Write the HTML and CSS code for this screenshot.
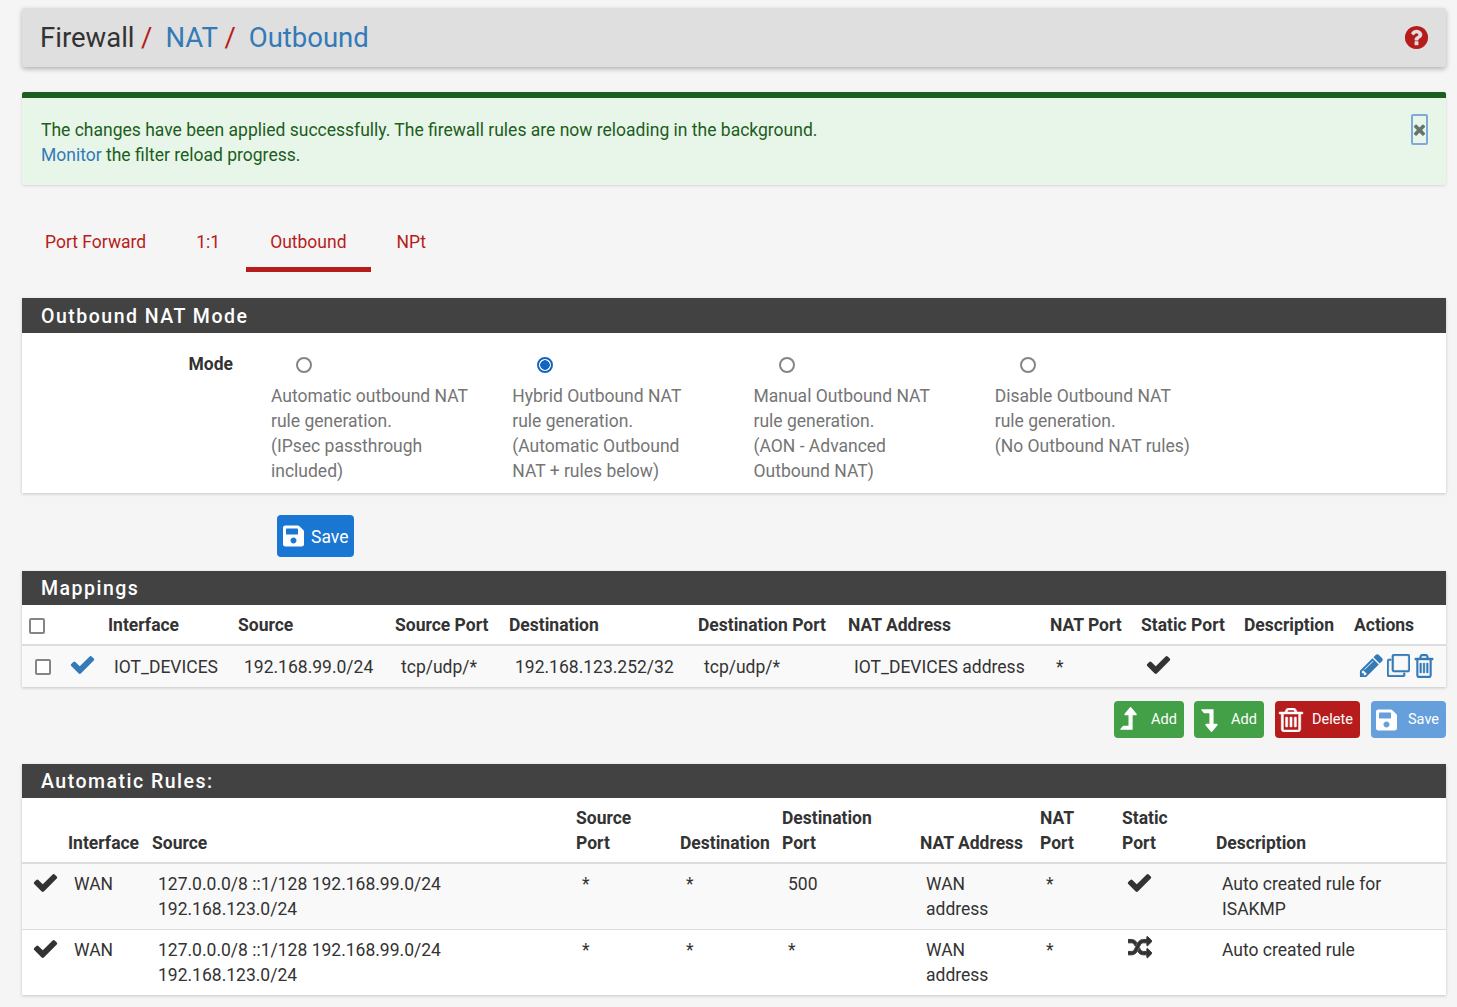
FILE: index.html
```html
<!DOCTYPE html>
<html lang="en">
<head>
<meta charset="utf-8">
<title>Firewall / NAT / Outbound</title>
<link rel="stylesheet" href="styles.css">
</head>
<body>
<svg class="defs" width="0" height="0" aria-hidden="true">
  <defs>
    <symbol id="i-check" viewBox="0 0 1792 1792"><path d="M1671 566q0 40-28 68l-724 724-136 136q-28 28-68 28t-68-28l-136-136-362-362q-28-28-28-68t28-68l136-136q28-28 68-28t68 28l294 295 656-657q28-28 68-28t68 28l136 136q28 28 28 68z"/></symbol>
    <symbol id="i-trash" viewBox="128 128 1536 1536" preserveAspectRatio="none"><path class="trash-path" d="M704 736v576q0 14-9 23t-23 9h-64q-14 0-23-9t-9-23v-576q0-14 9-23t23-9h64q14 0 23 9t9 23zm256 0v576q0 14-9 23t-23 9h-64q-14 0-23-9t-9-23v-576q0-14 9-23t23-9h64q14 0 23 9t9 23zm256 0v576q0 14-9 23t-23 9h-64q-14 0-23-9t-9-23v-576q0-14 9-23t23-9h64q14 0 23 9t9 23zm128 724v-948h-896v948q0 22 7 40.500t14.500 27 10.500 8.500h832q3 0 10.500-8.500t14.500-27 7-40.500zm-672-1076h448l-48-117q-7-9-17-11h-317q-10 2-17 11zm928 32v64q0 14-9 23t-23 9h-96v948q0 83-47 143.500t-113 60.500h-832q-66 0-113-58.500t-47-141.500v-952h-96q-14 0-23-9t-9-23v-64q0-14 9-23t23-9h309l70-167q15-37 54-63t79-26h320q40 0 79 26t54 63l70 167h309q14 0 23 9t9 23z"/></symbol>
    <symbol id="i-save" viewBox="0 0 448 512"><path d="M433.941 129.941l-83.882-83.882A48 48 0 0 0 316.118 32H48C21.49 32 0 53.49 0 80v352c0 26.51 21.49 48 48 48h352c26.51 0 48-21.49 48-48V163.882a48 48 0 0 0-14.059-33.941zM224 416c-35.346 0-64-28.654-64-64 0-35.346 28.654-64 64-64s64 28.654 64 64c0 35.346-28.654 64-64 64zm96-304.520V212c0 6.627-5.373 12-12 12H76c-6.627 0-12-5.373-12-12V108c0-6.627 5.373-12 12-12h228.520c3.183 0 6.235 1.264 8.485 3.515l3.480 3.480A11.996 11.996 0 0 1 320 111.480z"/></symbol>
    <symbol id="i-pencil" viewBox="0 0 1792 1792"><path d="M491 1536l91-91-235-235-91 91v107h128v128h107zm523-928q0-22-22-22-10 0-17 7l-542 542q-7 7-7 17 0 22 22 22 10 0 17-7l542-542q7-7 7-17zm-54-192l416 416-832 832h-416v-416zm683 96q0 53-37 90l-166 166-416-416 166-165q36-38 90-38 53 0 91 38l235 234q37 39 37 91z"/></symbol>
    <symbol id="i-clone" viewBox="0 0 1792 1792"><path class="clone-path" d="M1664 1632v-1088q0-13-9.500-22.500t-22.500-9.500h-1088q-13 0-22.500 9.500t-9.500 22.500v1088q0 13 9.500 22.500t22.500 9.500h1088q13 0 22.500-9.500t9.500-22.500zm128-1088v1088q0 66-47 113t-113 47h-1088q-66 0-113-47t-47-113v-1088q0-66 47-113t113-47h1088q66 0 113 47t47 113zm-384-384v160h-128v-160q0-13-9.500-22.500t-22.500-9.500h-1088q-13 0-22.500 9.500t-9.500 22.500v1088q0 13 9.500 22.500t22.500 9.500h160v128h-160q-66 0-113-47t-47-113v-1088q0-66 47-113t113-47h1088q66 0 113 47t47 113z"/></symbol>
    <symbol id="i-shuffle" viewBox="0 0 1792 1792"><path class="shuffle-path" d="M666 481q-60 92-137 273-22-45-37-72.500t-40.500-63.500-51-56.500-63-35-81.500-14.500h-224q-14 0-23-9t-9-23v-192q0-14 9-23t23-9h224q250 0 410 225zm1126 799q0 14-9 23l-320 320q-9 9-23 9-13 0-22.500-9.500t-9.500-22.500v-192q-32 0-85 .5t-81 1-73-1-71-5-64-10.500-63-18.500-58-28.500-59-40-55-53.500-56-69.500q59-93 136-273 22 45 37 72.500t40.500 63.500 51 56.500 63 35 81.500 14.500h256v-192q0-14 9-23t23-9q12 0 24 10l319 319q9 9 9 23zm0-896q0 14-9 23l-320 320q-9 9-23 9-13 0-22.500-9.500t-9.500-22.500v-192h-256q-48 0-87 15t-69 45-51 61.500-45 77.500q-32 62-78 171-29 66-49.500 111t-54 105-64 100-74 83-90 68.500-106.500 42-128 16.500h-224q-14 0-23-9t-9-23v-192q0-14 9-23t23-9h224q48 0 87-15t69-45 51-61.500 45-77.500q32-62 78-171 29-66 49.500-111t54-105 64-100 74-83 90-68.500 106.500-42 128-16.500h256v-192q0-14 9-23t23-9q12 0 24 10l319 319q9 9 9 23z"/></symbol>
    <symbol id="i-help" viewBox="0 0 1792 1792"><path d="M1024 1376v-192q0-14-9-23t-23-9h-192q-14 0-23 9t-9 23v192q0 14 9 23t23 9h192q14 0 23-9t9-23zm256-672q0-88-55.500-163t-138.500-116-170-41q-243 0-371 213-15 24 8 42l132 100q7 6 19 6 16 0 25-12 53-68 86-92 34-24 86-24 48 0 85.500 26t37.500 59q0 38-20 61t-68 45q-63 28-115.500 86.500t-52.500 125.500v36q0 14 9 23t23 9h192q14 0 23-9t9-23q0-19 21.500-49.500t54.500-49.500q32-18 49-28.500t46-35 44.500-48 28-60.500 12.500-81zm384 192q0 209-103 385.500t-279.500 279.500-385.500 103-385.500-103-279.500-279.500-103-385.500 103-385.500 279.500-279.500 385.500-103 385.500 103 279.500 279.500 103 385.500z"/></symbol>
    <symbol id="i-up" viewBox="0 0 1792 1792"><path d="M1402 603q-18 37-58 37h-192v864q0 14-9 23t-23 9h-704q-21 0-29-18-8-20 4-35l160-192q9-11 25-11h320v-640h-192q-40 0-58-37-17-37 9-68l320-384q18-22 49-22t49 22l320 384q27 32 9 68z"/></symbol>
    <symbol id="i-down" viewBox="0 0 1792 1792"><path d="M288 256h704q13 0 22.500 9.500t9.500 23.500v863h192q40 0 58 37t-9 69l-320 384q-18 22-49 22t-49-22l-320-384q-26-31-9-69 18-37 58-37h192v-640h-320q-14 0-25-11l-160-192q-13-14-4-34 9-19 29-19z"/></symbol>
    <symbol id="i-x" viewBox="0 0 1792 1792"><path d="M1490 1322q0 40-28 68l-136 136q-28 28-68 28t-68-28l-294-294-294 294q-28 28-68 28t-68-28l-136-136q-28-28-28-68t28-68l294-294-294-294q-28-28-28-68t28-68l136-136q28-28 68-28t68 28l294 294 294-294q28-28 68-28t68 28l136 136q28 28 28 68t-28 68l-294 294 294 294q28 28 28 68z"/></symbol>
  </defs>
</svg>

<div class="page">
  <header class="crumbs">
    <h1 class="crumb-title">Firewall<span class="sep">/</span><a class="crumb-link" href="#">NAT</a><span class="sep">/</span><a class="crumb-link" href="#">Outbound</a></h1>
    <a class="help" href="#" aria-label="Help"><svg class="ic-help"><use href="#i-help"/></svg></a>
  </header>

  <div class="alert">
    <p class="alert-text">The changes have been applied successfully. The firewall rules are now reloading in the background.<br><a class="alert-link" href="#">Monitor</a> the filter reload progress.</p>
    <button class="alert-close" type="button" aria-label="Close"><svg class="ic-x"><use href="#i-x"/></svg></button>
  </div>

  <nav class="tabs">
    <a class="tab" href="#">Port Forward</a>
    <a class="tab" href="#">1:1</a>
    <a class="tab tab-active" href="#">Outbound</a>
    <a class="tab" href="#">NPt</a>
  </nav>

  <section class="panel panel-mode">
    <h2 class="panel-title">Outbound NAT Mode</h2>
    <div class="mode-body">
      <div class="mode-label">Mode</div>
      <div class="mode-options">
        <label class="mode-option"><input class="radio" type="radio" name="mode"><span>Automatic outbound NAT<br>rule generation.<br>(IPsec passthrough<br>included)</span></label>
        <label class="mode-option"><input class="radio" type="radio" name="mode" checked><span>Hybrid Outbound NAT<br>rule generation.<br>(Automatic Outbound<br>NAT + rules below)</span></label>
        <label class="mode-option"><input class="radio" type="radio" name="mode"><span>Manual Outbound NAT<br>rule generation.<br>(AON - Advanced<br>Outbound NAT)</span></label>
        <label class="mode-option"><input class="radio" type="radio" name="mode"><span>Disable Outbound NAT<br>rule generation.<br>(No Outbound NAT rules)</span></label>
      </div>
    </div>
  </section>

  <div class="save-row">
    <button class="btn btn-primary" type="button"><svg class="ic-save"><use href="#i-save"/></svg>Save</button>
  </div>

  <section class="panel">
    <h2 class="panel-title panel-title-sm">Mappings</h2>
    <table class="grid grid-map">
      <colgroup>
        <col class="m1"><col class="m2"><col class="m3"><col class="m4"><col class="m5"><col class="m6"><col class="m7"><col class="m8"><col class="m9"><col class="m10"><col class="m11"><col class="m12">
      </colgroup>
      <thead>
        <tr>
          <th class="th-check"><input class="check" type="checkbox"></th>
          <th></th>
          <th>Interface</th>
          <th>Source</th>
          <th>Source Port</th>
          <th>Destination</th>
          <th>Destination Port</th>
          <th>NAT Address</th>
          <th>NAT Port</th>
          <th>Static Port</th>
          <th>Description</th>
          <th>Actions</th>
        </tr>
      </thead>
      <tbody>
        <tr class="row-alt">
          <td class="td-check"><input class="check" type="checkbox"></td>
          <td class="td-icon"><svg class="ic-check ic-blue"><use href="#i-check"/></svg></td>
          <td>IOT_DEVICES</td>
          <td>192.168.99.0/24</td>
          <td>tcp/udp/*</td>
          <td>192.168.123.252/32</td>
          <td>tcp/udp/*</td>
          <td>IOT_DEVICES address</td>
          <td>*</td>
          <td class="td-icon"><svg class="ic-check"><use href="#i-check"/></svg></td>
          <td></td>
          <td class="td-actions">
            <div class="actions">
              <svg class="ic-pencil ic-blue"><use href="#i-pencil"/></svg>
              <svg class="ic-clone ic-blue"><use href="#i-clone"/></svg>
              <svg class="ic-trash ic-blue"><use href="#i-trash"/></svg>
            </div>
          </td>
        </tr>
      </tbody>
    </table>
  </section>

  <div class="action-row">
    <button class="btn btn-sm btn-green btn-up" type="button"><svg class="ic-level"><use href="#i-up"/></svg>Add</button>
    <button class="btn btn-sm btn-green btn-down" type="button"><svg class="ic-level"><use href="#i-down"/></svg>Add</button>
    <button class="btn btn-sm btn-red" type="button"><svg class="ic-del"><use href="#i-trash"/></svg>Delete</button>
    <button class="btn btn-sm btn-light" type="button"><svg class="ic-save"><use href="#i-save"/></svg>Save</button>
  </div>

  <section class="panel">
    <h2 class="panel-title panel-title-sm">Automatic Rules:</h2>
    <table class="grid grid-auto">
      <colgroup>
        <col class="a1"><col class="a2"><col class="a3"><col class="a4"><col class="a5"><col class="a6"><col class="a7"><col class="a8"><col class="a9"><col class="a10">
      </colgroup>
      <thead>
        <tr>
          <th></th>
          <th>Interface</th>
          <th>Source</th>
          <th>Source<br>Port</th>
          <th>Destination</th>
          <th>Destination<br>Port</th>
          <th>NAT Address</th>
          <th>NAT<br>Port</th>
          <th>Static<br>Port</th>
          <th>Description</th>
        </tr>
      </thead>
      <tbody>
        <tr class="row-alt">
          <td class="td-rule"><svg class="ic-check"><use href="#i-check"/></svg></td>
          <td>WAN</td>
          <td>127.0.0.0/8 ::1/128 192.168.99.0/24<br>192.168.123.0/24</td>
          <td>*</td>
          <td>*</td>
          <td>500</td>
          <td>WAN<br>address</td>
          <td>*</td>
          <td class="td-static"><svg class="ic-check"><use href="#i-check"/></svg></td>
          <td>Auto created rule for<br>ISAKMP</td>
        </tr>
        <tr>
          <td class="td-rule"><svg class="ic-check"><use href="#i-check"/></svg></td>
          <td>WAN</td>
          <td>127.0.0.0/8 ::1/128 192.168.99.0/24<br>192.168.123.0/24</td>
          <td>*</td>
          <td>*</td>
          <td>*</td>
          <td>WAN<br>address</td>
          <td>*</td>
          <td class="td-static"><svg class="ic-shuffle"><use href="#i-shuffle"/></svg></td>
          <td>Auto created rule</td>
        </tr>
      </tbody>
    </table>
  </section>
</div>
</body>
</html>
```

FILE: styles.css
```css
* { box-sizing: border-box; }
html, body { margin: 0; padding: 0; }
body {
  background: #f5f5f5;
  color: #333;
  font-family: Roboto, "Liberation Sans", sans-serif;
  font-size: 17.5px;
  line-height: 25px;
}
svg { fill: currentColor; display: block; overflow: visible; }
.defs { position: absolute; }
.page { padding: 8px 11px 12px 22px; }

/* breadcrumb bar */
.crumbs {
  height: 59px;
  background: #dfdfdf;
  border-radius: 3px;
  box-shadow: 0 2px 5px rgba(0,0,0,.28);
  display: flex;
  align-items: center;
  justify-content: space-between;
  padding: 0 16px 0 18px;
}
.crumb-title { margin: 0; font-size: 27.5px; font-weight: 400; line-height: 36px; color: #333; }
.crumb-link { color: #337ab7; text-decoration: none; }
.sep { color: #b71c1c; margin: 0 13px 0 6.5px; }
.help { color: #b71c1c; display: block; }
.ic-help { width: 27px; height: 27px; }

/* alert */
.alert {
  margin-top: 25px;
  height: 93px;
  background: #e8f5e9;
  border-top: 6px solid #1b5e20;
  border-radius: 2px;
  box-shadow: 0 1px 3px rgba(0,0,0,.12);
  color: #1b5e20;
  display: flex;
  justify-content: space-between;
  padding: 20px 18px 0 19px;
}
.alert-text { margin: 0; }
.alert-link { color: #337ab7; text-decoration: none; }
.alert-close {
  width: 17px;
  height: 31px;
  padding: 0;
  margin-top: -4px;
  border: 2px solid #7fa9d9;
  border-radius: 2px;
  background: transparent;
  color: #66756a;
  display: flex;
  align-items: center;
  justify-content: center;
}
.ic-x { width: 17px; height: 17px; flex: none; }

/* tabs */
.tabs { display: flex; gap: 2px; margin-top: 32px; height: 55px; }
.tab {
  color: #b71c1c;
  text-decoration: none;
  padding: 13px 24px 0;
  height: 55px;
}
.tab:first-child { padding-left: 23px; }
.tab-active { border-bottom: 5px solid #b71c1c; }

/* panels */
.panel {
  background: #fff;
  box-shadow: 0 1px 3px rgba(0,0,0,.2);
  margin: 0;
}
.panel-mode { margin-top: 26px; }
.panel-title {
  margin: 0;
  height: 35px;
  padding: 0 19px;
  background: #424242;
  color: #fff;
  font-size: 19.5px;
  font-weight: 500;
  line-height: 37px;
  letter-spacing: 1.5px;
}
.panel-title-sm { height: 34px; line-height: 35px; }

/* mode section */
.mode-body { display: flex; height: 160px; }
.mode-label { width: 211px; text-align: right; padding-top: 19px; color: #333; font-weight: 700; }
.mode-options { display: grid; grid-template-columns: repeat(4, 241.25px); margin-left: 38px; }
.mode-option { color: #757575; display: block; padding-top: 24px; }
.mode-option span { display: block; margin-top: 11px; }
.radio {
  appearance: none;
  display: block;
  width: 16px;
  height: 16px;
  margin: 0 0 0 25px;
  border: 2px solid #858585;
  border-radius: 50%;
  background: #fff;
}
.radio:checked {
  border-color: #1565c0;
  background: radial-gradient(circle, #1565c0 0 4.5px, #fff 5px);
}

/* buttons */
.btn {
  font-family: inherit;
  border: 0;
  border-radius: 4px;
  color: #fff;
  display: inline-flex;
  align-items: center;
  padding: 0;
}
.save-row { margin: 22px 0 14px 255px; height: 42px; }
.btn-primary { background: #1976d2; width: 77px; height: 42px; font-size: 17.5px; padding: 1px 0 0 6px; }
.btn-primary .ic-save { width: 21px; height: 24px; margin: -1px 7px 0 0; }
.action-row { display: flex; justify-content: flex-end; gap: 10px; margin: 14px 0 26px; height: 37px; }
.btn-sm { height: 37px; font-size: 14.5px; }
.btn-green { background: #43a047; width: 70px; }
.btn-down { margin-right: 1px; }
.btn-red { background: #b71c1c; width: 85px; padding-left: 3px; margin-right: 1px; }
.btn-light { background: #659fdc; width: 75px; padding-left: 5px; }
.ic-level { width: 29px; height: 29px; flex: none; }
.btn-up .ic-level { margin-right: 8px; }
.btn-down .ic-level { margin: 0 5px 0 3px; }
.ic-del { width: 26px; height: 24px; margin-right: 8px; flex: none; }
.btn-sm .ic-save { width: 21px; height: 24px; margin-right: 11px; }

/* tables */
.grid { width: 100%; border-collapse: collapse; table-layout: fixed; }
.grid th {
  text-align: left;
  font-weight: 700;
  padding: 0;
  vertical-align: bottom;
  color: #333;
  white-space: nowrap;
}
.grid td { padding: 9px 6px 7px; vertical-align: top; color: #333; white-space: nowrap; }
.row-alt { background: #f9f9f9; }

.grid-map thead tr { height: 40px; border-bottom: 2px solid #ddd; }
.grid-map th { vertical-align: middle; padding-top: 2px; }
.m1 { width: 43px; } .m2 { width: 43px; } .m3 { width: 130px; } .m4 { width: 157px; }
.m5 { width: 114px; } .m6 { width: 189px; } .m7 { width: 150px; } .m8 { width: 202px; }
.m9 { width: 91px; } .m10 { width: 103px; } .m11 { width: 110px; } .m12 { width: 92px; }
.grid .th-check { padding-left: 7px; }
.grid .td-check { padding: 13px 0 0 13px; }
.check {
  appearance: none;
  display: block;
  width: 16px;
  height: 16px;
  margin: 0;
  border: 2px solid #858585;
  border-radius: 2px;
  background: #fff;
}
.grid .td-icon { padding: 5px 0 0 4px; }
.ic-check { width: 27px; height: 27px; color: #333; }
.ic-blue { color: #337ab7; }
.grid .td-actions { padding: 7px 0 0 4px; }
.actions { display: flex; align-items: flex-start; height: 27px; }
.ic-pencil { width: 27px; height: 27px; flex: none; margin-top: -1px; }
.ic-clone { width: 23px; height: 23px; flex: none; margin: 1px 1px 0 2px; transform: scaleY(-1); }
.clone-path { stroke: currentColor; stroke-width: 40; }
.ic-trash { width: 20px; height: 24px; flex: none; margin: 1px 0 0 3px; }
.trash-path { stroke: currentColor; stroke-width: 30; }

.grid-auto thead tr { height: 65px; border-bottom: 2px solid #ddd; }
.grid-auto th { padding-bottom: 6px; }
.grid-auto td { padding: 8px 6px 7px; }
.grid-auto tbody tr { height: 66px; border-bottom: 1px solid #ddd; }
.grid-auto tbody tr:last-child { height: 65px; border-bottom: 0; }
.a1 { width: 46px; } .a2 { width: 84px; } .a3 { width: 424px; } .a4 { width: 104px; }
.a5 { width: 102px; } .a6 { width: 138px; } .a7 { width: 120px; } .a8 { width: 82px; }
.a9 { width: 94px; } .a10 { width: 230px; }
.grid .td-rule { padding: 5px 0 0 10px; }
.grid .td-static { padding: 5px 0 0 4px; }
.ic-shuffle { width: 24px; height: 24px; margin: 1px 0 0 2px; color: #333; }
.shuffle-path { stroke: currentColor; stroke-width: 70; }
```
